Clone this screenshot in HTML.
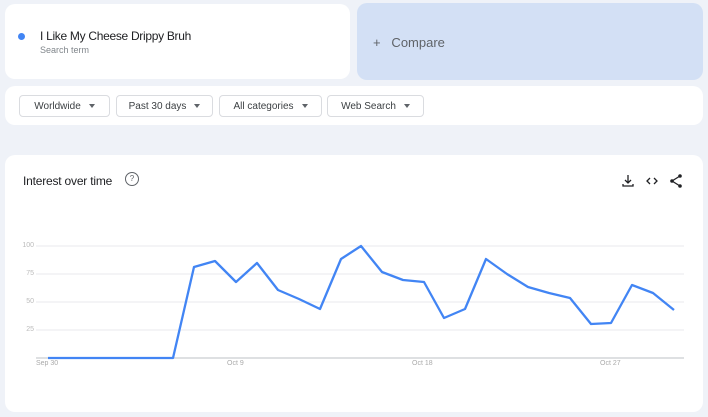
<!DOCTYPE html>
<html><head><style>
body{margin:0;width:708px;height:417px;background:#eff2f8;font-family:"Liberation Sans",sans-serif;position:relative;overflow:hidden}
.c{position:absolute;background:#fff;border-radius:10px}
.btn{position:absolute;top:95px;height:22px;border:1px solid #dadce0;border-radius:4px;font-size:10px;color:#3c4043;line-height:22px;text-align:center;box-sizing:border-box}
.btn:after{content:"";display:inline-block;margin-left:8px;border-left:3.5px solid transparent;border-right:3.5px solid transparent;border-top:4px solid #5f6368;vertical-align:1px}
.yl{position:absolute;left:20px;font-size:7px;color:#bbb;width:14px;text-align:right}
.xl{position:absolute;top:360px;font-size:7px;color:#aaa}
</style></head><body>
<div class="c" style="left:5px;top:4px;width:345px;height:75px"></div>
<div style="position:absolute;left:18px;top:33px;width:7px;height:7px;border-radius:50%;background:#4285f4"></div>
<div style="position:absolute;left:40px;top:29px;font-size:12px;letter-spacing:-0.3px;color:#202124">I Like My Cheese Drippy Bruh</div>
<div style="position:absolute;left:40px;top:45px;font-size:9px;color:#80868b">Search term</div>
<div style="position:absolute;left:357px;top:3px;width:346px;height:77px;border-radius:10px;background:#d3e0f5"></div>
<div style="position:absolute;left:373px;top:35px;font-size:13px;color:#5f6368">+&nbsp;&nbsp;&nbsp;Compare</div>
<div class="c" style="left:5px;top:86px;width:698px;height:39px"></div>
<div class="btn" style="left:19px;width:91px">Worldwide</div>
<div class="btn" style="left:116px;width:97px">Past 30 days</div>
<div class="btn" style="left:219px;width:103px">All categories</div>
<div class="btn" style="left:327px;width:97px">Web Search</div>
<div class="c" style="left:5px;top:155px;width:698px;height:257px"></div>
<div style="position:absolute;left:23px;top:174px;font-size:12px;letter-spacing:-0.2px;color:#202124">Interest over time</div>
<div style="position:absolute;left:125px;top:172px;width:12px;height:12px;border:1px solid #5f6368;border-radius:50%;font-size:8px;line-height:12px;text-align:center;color:#5f6368">?</div>
<svg style="position:absolute;left:0;top:0" width="708" height="417">
<g stroke="#202124" stroke-width="1.3" fill="none">
<path d="M628 175v8M625 180l3 3 3-3M623 184v2h10v-2"/>
<path d="M650 178l-3 3 3 3M654 178l3 3-3 3"/>
<path d="M680 176l-8 5 8 5"/>
</g>
<g fill="#202124"><circle cx="680" cy="176" r="1.8"/><circle cx="672" cy="181" r="1.8"/><circle cx="680" cy="186" r="1.8"/></g>
<g stroke="#e8eaed" stroke-width="1"><line x1="36" y1="246" x2="684" y2="246"/><line x1="36" y1="274" x2="684" y2="274"/><line x1="36" y1="302" x2="684" y2="302"/><line x1="36" y1="330" x2="684" y2="330"/></g>
<line x1="36" y1="358" x2="684" y2="358" stroke="#bdc1c6"/>
<polyline fill="none" stroke="#4285f4" stroke-width="2.3" stroke-linejoin="round" points="48,358 173,358 194,267 215,261 236,282 257,263 278,290 299,299 320,309 341,259 361,246 382,272 403,280 424,282 444,318 465,309 486,259 507,274 528,287 549,293 570,298 591,324 611,323 632,285 653,293 674,310"/>
</svg>
<div class="yl" style="top:242px">100</div>
<div class="yl" style="top:270px">75</div>
<div class="yl" style="top:298px">50</div>
<div class="yl" style="top:326px">25</div>
<div class="xl" style="left:36px">Sep 30</div>
<div class="xl" style="left:227px">Oct 9</div>
<div class="xl" style="left:412px">Oct 18</div>
<div class="xl" style="left:600px">Oct 27</div>
</body></html>
